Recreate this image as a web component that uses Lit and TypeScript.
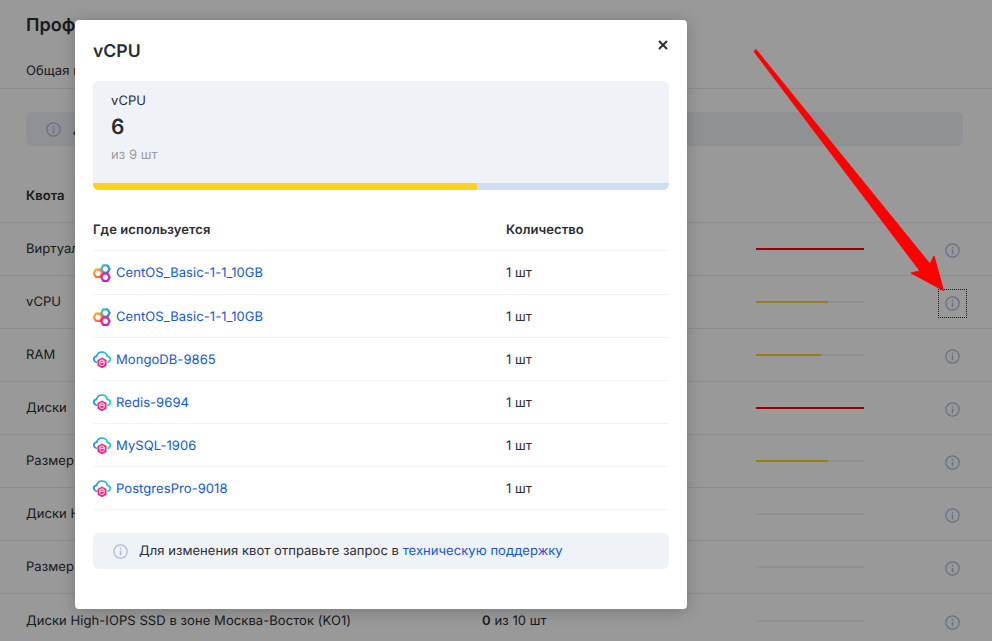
import { LitElement, html, css, svg } from 'lit';
import { customElement, property } from 'lit/decorators.js';

type Quota = { name: string; used: number; total: number; unit: string; fill: number; color: string; active?: boolean };
type Usage = { name: string; kind: 'hex' | 'cloud' };

const RED = '#ff0000';
const YELLOW = '#ffd21f';

const quotas: Quota[] = [
  { name: 'Виртуальные машины', used: 2, total: 2, unit: 'шт', fill: 100, color: RED },
  { name: 'vCPU', used: 6, total: 9, unit: 'шт', fill: 66.7, color: YELLOW, active: true },
  { name: 'RAM', used: 12, total: 20, unit: 'ГБ', fill: 60, color: YELLOW },
  { name: 'Диски', used: 6, total: 6, unit: 'шт', fill: 100, color: RED },
  { name: 'Размер дисков', used: 200, total: 300, unit: 'ГБ', fill: 66.7, color: YELLOW },
  { name: 'Диски High-IOPS SSD', used: 0, total: 10, unit: 'шт', fill: 0, color: YELLOW },
  { name: 'Размер дисков High-IOPS SSD', used: 0, total: 100, unit: 'ГБ', fill: 0, color: YELLOW },
  { name: 'Диски High-IOPS SSD в зоне Москва-Восток (KO1)', used: 0, total: 10, unit: 'шт', fill: 0, color: YELLOW },
];

const usages: Usage[] = [
  { name: 'CentOS_Basic-1-1_10GB', kind: 'hex' },
  { name: 'CentOS_Basic-1-1_10GB', kind: 'hex' },
  { name: 'MongoDB-9865', kind: 'cloud' },
  { name: 'Redis-9694', kind: 'cloud' },
  { name: 'MySQL-1906', kind: 'cloud' },
  { name: 'PostgresPro-9018', kind: 'cloud' },
];

const infoIcon = html`
  <svg class="info" viewBox="0 0 16 16" width="15" height="15" fill="none">
    <circle cx="8" cy="8" r="7.1" stroke="currentColor" stroke-width="1.3"></circle>
    <rect x="7.2" y="7" width="1.6" height="5" fill="currentColor"></rect>
    <rect x="7.2" y="4" width="1.6" height="1.7" fill="currentColor"></rect>
  </svg>
`;

const hexagon = (cx: number, cy: number, stroke: string) => {
  const r = 4.2;
  const h = r * 0.87;
  const d = `M${cx - r} ${cy}L${cx - r / 2} ${cy - h}H${cx + r / 2}L${cx + r} ${cy}L${cx + r / 2} ${cy + h}H${cx - r / 2}Z`;
  return svg`<path d=${d} stroke=${stroke} stroke-width="2.2" stroke-linejoin="round"></path>`;
};

const hexIcon = html`
  <svg class="kind" viewBox="0 0 18 18" width="18" height="18" fill="none">
    <defs>
      <linearGradient id="hexLeft" x1="0" y1="0" x2="1" y2="1">
        <stop offset="0" stop-color="#ffb01f"></stop>
        <stop offset="1" stop-color="#ff5a4d"></stop>
      </linearGradient>
      <linearGradient id="hexTop" x1="0" y1="0" x2="1" y2="1">
        <stop offset="0" stop-color="#1fd6c4"></stop>
        <stop offset="1" stop-color="#3d6fe0"></stop>
      </linearGradient>
      <linearGradient id="hexLow" x1="0" y1="0" x2="1" y2="1">
        <stop offset="0" stop-color="#ff1f8f"></stop>
        <stop offset="1" stop-color="#9a2be0"></stop>
      </linearGradient>
    </defs>
    ${hexagon(12.4, 5, 'url(#hexTop)')}
    ${hexagon(5, 9.2, 'url(#hexLeft)')}
    ${hexagon(12.4, 13.2, 'url(#hexLow)')}
  </svg>
`;

const cloudIcon = html`
  <svg class="kind" viewBox="0 0 18 18" width="18" height="18" fill="none">
    <defs>
      <linearGradient id="cloudLine" x1="0" y1="0" x2="1" y2="0">
        <stop offset="0" stop-color="#1f8fef"></stop>
        <stop offset="1" stop-color="#1fd0d0"></stop>
      </linearGradient>
    </defs>
    <path d="M3.400 11.300C1.600 10.700.7 9.600.8 8.100.9 6.600 2.100 5.600 3.600 5.400 4.300 2.700 6.400 1 8.900 1c2.600 0 4.800 1.700 5.400 4.300 1.800.2 3 1.400 3 3 0 1.300-.8 2.400-2.300 3" stroke="url(#cloudLine)" stroke-width="1.700" stroke-linecap="round"></path>
    <path d="M9 6.600l4.500 2.500v5.600L9 17.200l-4.500-2.500V9.100z" fill="#ff1f7d"></path>
    <ellipse cx="9" cy="10.200" rx="2.200" ry="1.200" stroke="#fff" stroke-width="1"></ellipse>
    <path d="M6.800 10.200v3c0 .7 1 1.200 2.200 1.200s2.200-.5 2.200-1.200v-3" stroke="#fff" stroke-width="1"></path>
  </svg>
`;

@customElement('app-root')
export class AppRoot extends LitElement {
  @property({ type: Array }) quotas: Quota[] = quotas;
  @property({ type: Array }) usages: Usage[] = usages;

  static styles = css`
    :host {
      color: #2c2d33;
      display: block;
      font-family: Inter, 'Noto Sans', sans-serif;
      font-size: 13px;
      height: 641px;
      letter-spacing: 0.07px;
      overflow: hidden;
      position: relative;
      text-rendering: geometricPrecision;
    }

    a {
      color: #1259d6;
      text-decoration: none;
    }

    .page {
      background: #ffffff;
      height: 641px;
    }

    .page h1 {
      font-size: 18px;
      font-weight: 600;
      line-height: 24px;
      margin: 0;
      padding: 14px 26px 0;
    }

    .tabs {
      border-bottom: 1px solid #e8ebf0;
      height: 28px;
      line-height: 22px;
      padding: 22px 26px 0;
    }

    .notice {
      align-items: center;
      background: #eff2f7;
      border-radius: 6px;
      display: flex;
      gap: 12px;
      height: 34px;
      margin: 23px 29px 0 26px;
      padding: 0 20px;
    }

    .quota-head,
    .quota-row {
      align-items: center;
      border-bottom: 1px solid #e8ebf0;
      box-sizing: border-box;
      display: flex;
      height: 53px;
      padding: 0 25px 0 26px;
    }

    .quota-head {
      font-weight: 600;
      margin-top: 24px;
    }

    .quota-row:last-child {
      border-bottom: none;
    }

    .quota-name {
      flex: none;
      width: 456px;
    }

    .quota-value {
      flex: none;
      width: 274px;
    }

    .quota-value b {
      font-weight: 600;
    }

    .track {
      background: #eff1f4;
      flex: none;
      height: 2px;
      width: 108px;
    }

    .track div {
      height: 100%;
    }

    .hint {
      align-items: center;
      background: none;
      border: none;
      box-sizing: border-box;
      display: flex;
      flex: none;
      height: 27px;
      justify-content: center;
      margin: 3px 0 0 75px;
      padding: 0;
      width: 27px;
    }

    .hint.active {
      outline: 1px dotted #0a2f8c;
    }

    .info {
      color: #a9bcdd;
      display: block;
      flex: none;
    }

    .overlay {
      background: rgba(0, 0, 0, 0.4);
      inset: 0;
      position: absolute;
    }

    .modal {
      background: #ffffff;
      border-radius: 4px;
      box-shadow: 0 2px 16px rgba(0, 0, 0, 0.22);
      box-sizing: border-box;
      height: 589px;
      margin: 20px 0 0 75px;
      padding: 18px;
      position: relative;
      width: 612px;
    }

    .modal h2 {
      font-size: 17.6px;
      font-weight: 600;
      letter-spacing: 0;
      line-height: 27px;
      margin: 0 0 16px;
    }

    .close {
      background: none;
      border: none;
      height: 14px;
      padding: 0;
      position: absolute;
      right: 17px;
      top: 18px;
      width: 14px;
    }

    .close svg {
      display: block;
    }

    .stat {
      background: #eff2f7;
      border-radius: 6px;
      display: flex;
      flex-direction: column;
      height: 109px;
      overflow: hidden;
    }

    .stat-body {
      flex: 1;
      padding: 11px 18px 0;
    }

    .stat-label {
      line-height: 18px;
    }

    .stat-value {
      font-size: 21px;
      font-weight: 600;
      line-height: 28px;
      margin-top: 4px;
    }

    .stat-total {
      color: #9a9da3;
      line-height: 18px;
      margin-top: 4px;
    }

    .stat-bar {
      background: #d0ddf0;
      height: 7px;
    }

    .stat-bar div {
      background: #ffd21f;
      height: 100%;
    }

    .use-head,
    .use-row {
      align-items: center;
      border-bottom: 1px solid #eff2f7;
      box-sizing: border-box;
      display: grid;
      grid-template-columns: 413px 1fr;
    }

    .use-head {
      font-weight: 600;
      height: 61px;
      padding-top: 20px;
    }

    .use-row {
      height: 43px;
      padding-top: 1px;
    }

    .use-head + .use-row {
      height: 44px;
      padding-top: 0;
    }

    .use-name {
      align-items: center;
      display: flex;
      gap: 5px;
    }

    .kind {
      display: block;
      flex: none;
    }

    .modal-note {
      align-items: center;
      background: #eff2f7;
      border-radius: 6px;
      display: flex;
      gap: 11px;
      height: 36px;
      letter-spacing: 0.05px;
      margin-top: 23px;
      padding: 0 20px;
    }

    .arrow {
      height: 641px;
      left: 0;
      pointer-events: none;
      position: absolute;
      top: 0;
      width: 992px;
    }
  `;

  renderQuota(quota: Quota) {
    return html`
      <div class="quota-row">
        <span class="quota-name">${quota.name}</span>
        <span class="quota-value"><b>${quota.used}</b> из ${quota.total} ${quota.unit}</span>
        <div class="track">
          <div style="width: ${quota.fill}%; background: ${quota.color}"></div>
        </div>
        <button class="hint ${quota.active ? 'active' : ''}">${infoIcon}</button>
      </div>
    `;
  }

  renderUsage(usage: Usage) {
    return html`
      <div class="use-row">
        <span class="use-name">
          ${usage.kind === 'hex' ? hexIcon : cloudIcon}
          <a href="#">${usage.name}</a>
        </span>
        <span>1 шт</span>
      </div>
    `;
  }

  render() {
    return html`
      <div class="page">
        <h1>Профиль</h1>
        <div class="tabs">Общая информация</div>
        <div class="notice">${infoIcon}<span>Для изменения квот отправьте запрос</span></div>
        <div class="quota-head">Квота</div>
        ${this.quotas.map(quota => this.renderQuota(quota))}
      </div>

      <div class="overlay">
        <section class="modal">
          <h2>vCPU</h2>
          <button class="close">
            <svg viewBox="0 0 14 14" width="14" height="14">
              <path d="M3 3l8 8M11 3l-8 8" stroke="#2c2d33" stroke-width="2"></path>
            </svg>
          </button>

          <div class="stat">
            <div class="stat-body">
              <div class="stat-label">vCPU</div>
              <div class="stat-value">6</div>
              <div class="stat-total">из 9 шт</div>
            </div>
            <div class="stat-bar"><div style="width: ${(6 / 9) * 100}%"></div></div>
          </div>

          <div class="use-head">
            <span>Где используется</span>
            <span>Количество</span>
          </div>
          ${this.usages.map(usage => this.renderUsage(usage))}

          <div class="modal-note">
            ${infoIcon}
            <span>Для изменения квот отправьте запрос в <a href="#">техническую поддержку</a></span>
          </div>
        </section>
      </div>

      <svg class="arrow" viewBox="0 0 992 641">
        <path
          d="M756 49.500L754 51.500L920 271L911 273L943.500 290.500L934 256L930 264Z"
          fill="#ff0000"
          stroke="#ff0000"
          stroke-linejoin="round"
        ></path>
      </svg>
    `;
  }
}
